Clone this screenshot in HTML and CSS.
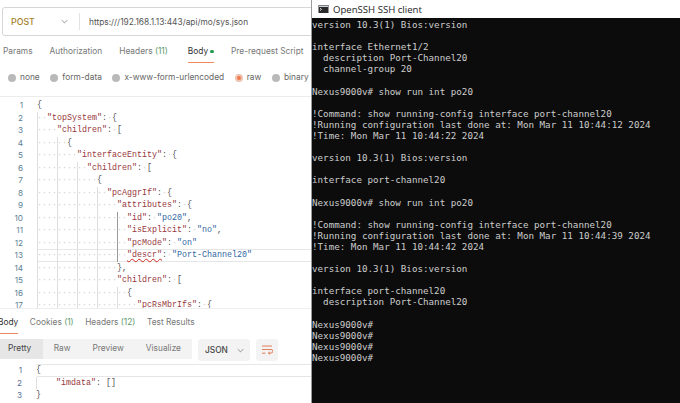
FILE: index.html
```html
<!DOCTYPE html>
<html lang="en">
<head>
    <meta charset="UTF-8">
    <title>POST sys.json</title>
    <link rel="stylesheet" href="styles.css">
</head>
<body>
    <div class="client">
        <div class="url-bar">
            <div class="method">POST
                <svg class="chevron" viewBox="0 0 10 6"><polyline points="1 1 5 5 9 1"></polyline></svg>
            </div>
            <div class="url">https:///192.168.1.13:443/api/mo/sys.json</div>
        </div>

        <div class="tabs request-tabs">
            <span class="tab">Params</span>
            <span class="tab">Authorization</span>
            <span class="tab">Headers <em>(11)</em></span>
            <span class="tab active">Body <i class="dot"></i></span>
            <span class="tab">Pre-request Script</span>
        </div>

        <div class="radios">
            <span class="radio"><i></i>none</span>
            <span class="radio"><i></i>form-data</span>
            <span class="radio"><i></i>x-www-form-urlencoded</span>
            <span class="radio checked"><i></i>raw</span>
            <span class="radio"><i></i>binary</span>
        </div>

        <div class="code request-code">
            <div class="line"><b>1</b><span class="p">{</span></div>
            <div class="line"><b>2</b><u>··</u><span class="k">"topSystem"</span><span class="p">:<s>·</s>{</span></div>
            <div class="line"><b>3</b><u>····</u><span class="k">"children"</span><span class="p">:<s>·</s>[</span></div>
            <div class="line"><b>4</b><u>····</u><u>··</u><span class="p">{</span></div>
            <div class="line"><b>5</b><u>····</u><u>····</u><span class="k">"interfaceEntity"</span><span class="p">:<s>·</s>{</span></div>
            <div class="line"><b>6</b><u>····</u><u>····</u><u>··</u><span class="k">"children"</span><span class="p">:<s>·</s>[</span></div>
            <div class="line"><b>7</b><u>····</u><u>····</u><u>····</u><span class="p">{</span></div>
            <div class="line"><b>8</b><u>····</u><u>····</u><u>····</u><u>··</u><span class="k">"pcAggrIf"</span><span class="p">:<s>·</s>{</span></div>
            <div class="line"><b>9</b><u>····</u><u>····</u><u>····</u><u>····</u><span class="k">"attributes"</span><span class="p">:<s>·</s>{</span></div>
            <div class="line"><b>10</b><u>····</u><u>····</u><u>····</u><u>····</u><u class="dark">··</u><span class="k">"id"</span><span class="p">:<s>·</s></span><span class="v">"po20"</span><span class="p">,</span></div>
            <div class="line"><b>11</b><u>····</u><u>····</u><u>····</u><u>····</u><u class="dark">··</u><span class="k">"isExplicit"</span><span class="p">:<s>·</s></span><span class="v">"no"</span><span class="p">,</span></div>
            <div class="line"><b>12</b><u>····</u><u>····</u><u>····</u><u>····</u><u class="dark">··</u><span class="k">"pcMode"</span><span class="p">:<s>·</s></span><span class="v">"on"</span></div>
            <div class="line current"><b>13</b><u>····</u><u>····</u><u>····</u><u>····</u><u class="dark">··</u><span class="k squiggle">"descr"</span><span class="p">:<s>·</s></span><span class="v">"Port-Channel20"</span></div>
            <div class="line"><b>14</b><u>····</u><u>····</u><u>····</u><u>····</u><span class="p">},</span></div>
            <div class="line"><b>15</b><u>····</u><u>····</u><u>····</u><u>····</u><span class="k">"children"</span><span class="p">:<s>·</s>[</span></div>
            <div class="line"><b>16</b><u>····</u><u>····</u><u>····</u><u>····</u><u>··</u><span class="p">{</span></div>
            <div class="line"><b>17</b><u>····</u><u>····</u><u>····</u><u>····</u><u>····</u><span class="k">"pcRsMbrIfs"</span><span class="p">:<s>·</s>{</span></div>
        </div>

        <div class="response">
            <div class="tabs response-tabs">
                <span class="tab active">Body</span>
                <span class="tab">Cookies <em>(1)</em></span>
                <span class="tab">Headers <em>(12)</em></span>
                <span class="tab">Test Results</span>
            </div>
            <div class="toolbar">
                <div class="views">
                    <span class="view active">Pretty</span>
                    <span class="view">Raw</span>
                    <span class="view">Preview</span>
                    <span class="view">Visualize</span>
                </div>
                <div class="format">JSON
                    <svg class="chevron" viewBox="0 0 10 6"><polyline points="1 1 5 5 9 1"></polyline></svg>
                </div>
                <div class="wrap">
                    <svg viewBox="0 0 12 10"><path d="M1 1h10M1 4.5h9a1.6 1.6 0 0 1 0 3.6H7.5M8.8 6.8 7.3 8.1l1.5 1.3M1 8.2h3.5"></path></svg>
                </div>
            </div>
            <div class="code response-code">
                <div class="line current"><b>1</b><span class="p">{</span></div>
                <div class="line"><b>2</b><u>    </u><span class="k">"imdata"</span><span class="p">: []</span></div>
                <div class="line"><b>3</b><span class="p">}</span></div>
            </div>
        </div>
    </div>

    <div class="terminal">
        <div class="titlebar">
            <svg class="console-icon" viewBox="0 0 10 8"><rect width="10" height="8" fill="#2a2a2a"></rect><rect x="0.5" y="0.5" width="9" height="1.5" fill="#cfd3d8"></rect><path d="M1.5 3.2 3 4.4 1.5 5.6" fill="none" stroke="#fff" stroke-width="0.8"></path></svg>
            OpenSSH SSH client
        </div>
        <div class="screen">
            <div>version 10.3(1) Bios:version</div>
            <div></div>
            <div>interface Ethernet1/2</div>
            <div>  description Port-Channel20</div>
            <div>  channel-group 20</div>
            <div></div>
            <div>Nexus9000v# show run int po20</div>
            <div></div>
            <div>!Command: show running-config interface port-channel20</div>
            <div>!Running configuration last done at: Mon Mar 11 10:44:12 2024</div>
            <div>!Time: Mon Mar 11 10:44:22 2024</div>
            <div></div>
            <div>version 10.3(1) Bios:version</div>
            <div></div>
            <div>interface port-channel20</div>
            <div></div>
            <div>Nexus9000v# show run int po20</div>
            <div></div>
            <div>!Command: show running-config interface port-channel20</div>
            <div>!Running configuration last done at: Mon Mar 11 10:44:39 2024</div>
            <div>!Time: Mon Mar 11 10:44:42 2024</div>
            <div></div>
            <div>version 10.3(1) Bios:version</div>
            <div></div>
            <div>interface port-channel20</div>
            <div>  description Port-Channel20</div>
            <div></div>
            <div>Nexus9000v#</div>
            <div>Nexus9000v#</div>
            <div>Nexus9000v#</div>
            <div>Nexus9000v#</div>
        </div>
    </div>
</body>
</html>
```

FILE: styles.css
```css
* {
    margin: 0;
    padding: 0;
    box-sizing: border-box;
}

body {
    width: 680px;
    height: 403px;
    display: flex;
    overflow: hidden;
    background: #fff;
    font-family: Inter, "Noto Sans", sans-serif;
    font-size: 8.35px;
    color: #6b6b6b;
}

.client {
    width: 311px;
    flex-shrink: 0;
    overflow: hidden;
    display: flex;
    flex-direction: column;
}

.chevron {
    width: 7px;
    height: 5px;
    fill: none;
    stroke: #777;
    stroke-width: 1.1;
}

.url-bar {
    display: flex;
    align-items: center;
    flex-shrink: 0;
    width: 330px;
    height: 29px;
    margin: 7px 0 0 2px;
    border: 1px solid #d6d6d6;
    border-radius: 3px;
}

.method {
    width: 77px;
    height: 17px;
    padding-left: 8px;
    padding-right: 11px;
    display: flex;
    align-items: center;
    justify-content: space-between;
    border-right: 1px solid #e2e2e2;
    font-weight: 500;
    font-size: 8.8px;
    color: #a5802a;
}

.url {
    padding-left: 9px;
    color: #555;
}

.tabs {
    display: flex;
    flex-shrink: 0;
}

.tab {
    white-space: nowrap;
    color: #777;
}

.tab em {
    font-style: normal;
    color: #5a9a6a;
}

.tab.active {
    color: #333;
    border-bottom: 1px solid #ef8a5f;
}

.dot {
    display: inline-block;
    width: 3.5px;
    height: 3.5px;
    border-radius: 50%;
    background: #1d9a4e;
    vertical-align: 1px;
}

.request-tabs {
    height: 27px;
    margin-top: 1px;
    padding-left: 3px;
    align-items: stretch;
}

.request-tabs .tab {
    margin-right: 17px;
    padding-top: 9px;
}

.request-tabs .tab.active {
    height: 26px;
    margin-left: 3px;
}

.radios {
    display: flex;
    flex-shrink: 0;
    height: 33px;
    padding: 8px 0 0 8px;
    gap: 10.6px;
    border-bottom: 1px solid #ececec;
}

.radio {
    display: flex;
    align-items: flex-start;
    gap: 4px;
    white-space: nowrap;
    color: #666;
}

.radio i {
    width: 8px;
    height: 8px;
    margin-top: 2px;
    border-radius: 50%;
    background: #b9b9b9;
}

.radio.checked i {
    background: #ef7a4c;
    border: 2px solid #eec4b2;
}

.code {
    font-family: "Liberation Mono", monospace;
    font-size: 8.33px;
    color: #555;
}

.line {
    display: flex;
    height: 12.5px;
    line-height: 12.5px;
    white-space: pre;
}

.line b {
    width: 37px;
    flex-shrink: 0;
    padding-right: 14px;
    text-align: right;
    font-family: Inter, sans-serif;
    font-size: 8.2px;
    font-weight: 400;
    color: #5d8296;
}

.line u,
.line s {
    text-decoration: none;
    color: #cfcfcf;
}

.line u {
    box-shadow: inset 1px 0 0 #dedede;
}

.line u.dark {
    box-shadow: inset 1px 0 0 #9a9a9a;
}

.line.current {
    box-shadow: inset 37px 0 0 #fff, inset 0 1px 0 #e6e6e6, inset 0 -1px 0 #e6e6e6;
}

.k {
    color: #97383c;
}

.v {
    color: #2f66a3;
}

.p {
    color: #555;
}

.squiggle {
    text-decoration: underline wavy #cc2a1e;
    text-decoration-thickness: 0.8px;
}

.request-code {
    flex-shrink: 0;
    height: 211px;
    padding-top: 2px;
    overflow: hidden;
}

.response {
    flex: 1;
    overflow: hidden;
    border-top: 1px solid #eee;
}

.response-tabs {
    height: 23px;
    margin: 2px 0 0 -2px;
    padding-top: 6px;
    gap: 11.5px;
}

.response-tabs .tab {
    height: 17px;
}

.toolbar {
    display: flex;
    align-items: flex-start;
    height: 25px;
    margin-top: 5px;
}

.views {
    display: flex;
    flex-shrink: 0;
    width: 192px;
    height: 20px;
    background: #f3f3f3;
}

.view {
    padding: 4px 11px 0;
    color: #777;
}

.view.active {
    width: 43px;
    padding: 4px 0 0 8px;
    background: #e6e6e6;
    color: #444;
}

.format {
    display: flex;
    align-items: center;
    gap: 9px;
    flex-shrink: 0;
    width: 52px;
    height: 22px;
    margin-left: 6px;
    padding-left: 7px;
    border-radius: 3px;
    background: #f3f3f3;
    color: #444;
    font-weight: 500;
}

.wrap {
    display: flex;
    align-items: center;
    justify-content: center;
    flex-shrink: 0;
    width: 22px;
    height: 22px;
    margin-left: 6px;
    border-radius: 3px;
    background: #f3f3f3;
}

.wrap svg {
    width: 12px;
    height: 10px;
    fill: none;
    stroke: #e0704a;
    stroke-width: 0.9;
}

.response-code .line b {
    width: 36px;
    color: #5b6f9a;
}

.terminal {
    flex: 1;
    display: flex;
    flex-direction: column;
    border-left: 1px solid #9a9a9a;
    background: #0c0c0c;
}

.titlebar {
    display: flex;
    align-items: center;
    gap: 4px;
    height: 18px;
    flex-shrink: 0;
    padding-left: 6px;
    background: #fff;
    font-family: "Open Sans", sans-serif;
    font-size: 9.6px;
    color: #222;
}

.console-icon {
    width: 11px;
    height: 8px;
}

.screen {
    padding-top: 1px;
    font-family: "DejaVu Sans Mono", monospace;
    font-size: 9.22px;
    color: #cccccc;
}

.screen div {
    height: 11.1px;
    line-height: 11.1px;
    white-space: pre;
}
```
